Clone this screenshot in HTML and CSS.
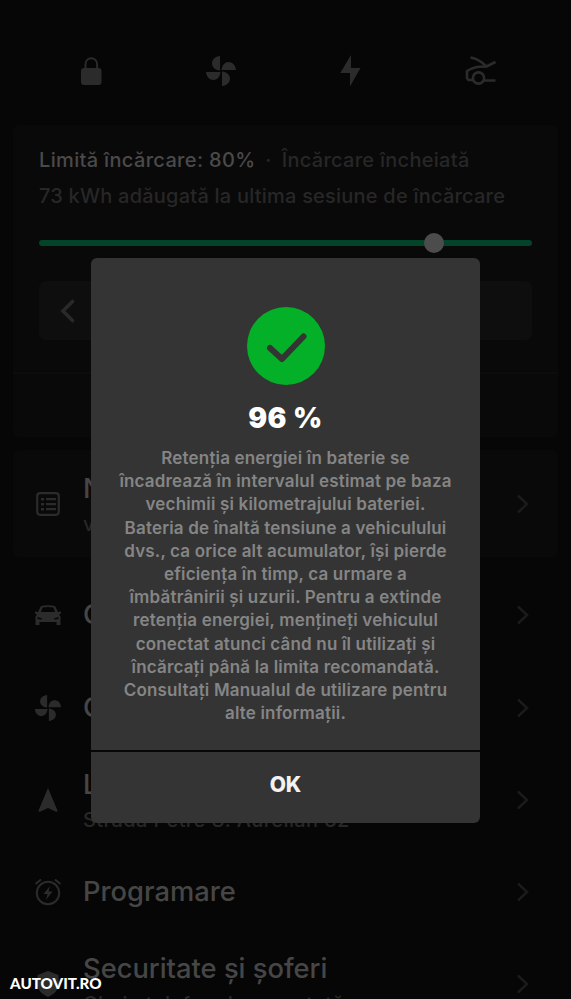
FILE: index.html
```html
<!DOCTYPE html>
<html lang="ro">
<head>
<meta charset="UTF-8">
<meta name="viewport" content="width=device-width, initial-scale=1.0">
<title>Retenția energiei în baterie</title>
<link rel="stylesheet" href="styles.css">
</head>
<body>

<!-- shared icons -->
<svg class="defs">
  <symbol id="fan" viewBox="0 0 32 32">
    <path d="M15 1v14.500C10 15 7 12 7 8.500 7 4.500 10 1.500 15 1zM31 15H16.500C17 10 20 7 23.500 7 27.500 7 30.500 10 31 15zM17 31V16.500C22 17 25 20 25 23.500 25 27.500 22 30.500 17 31zM1 17h14.500C15 22 12 25 8.500 25 4.500 25 1.500 22 1 17z"/>
  </symbol>
  <symbol id="chevron" viewBox="0 0 14 20">
    <path d="M2 1.500L11 10 2 18.500" fill="none" stroke="currentColor" stroke-width="2.500"/>
  </symbol>
</svg>

<div class="screen">
  <div class="quick">
    <svg width="30" height="30" viewBox="0 0 30 30"><path d="M9.500 14V8a5.800 5.800 0 0 1 11.600 0v6" fill="none" stroke="currentColor" stroke-width="2"/><rect x="5" y="12" width="20.500" height="17" rx="3"/></svg>
    <svg width="32" height="32"><use href="#fan"/></svg>
    <svg width="30" height="32" viewBox="0 0 30 32"><path d="M16 0L5.300 18H15v13.500L25.500 13H16z"/></svg>
    <svg width="32" height="30" viewBox="0 0 32 30"><g fill="none" stroke="currentColor" stroke-width="2.600" stroke-linejoin="round"><path d="M6.500 1.500c7 1 11 4 16 9l9-4.500"/><path d="M22.500 10.500c-10 0-14 1-19.500 4.500V22l1.500 2H9M20 24.500h11.500"/><circle cx="14.500" cy="22" r="5.600"/></g></svg>
  </div>

  <div class="card charge">
    <div class="charge-body">
      <div class="limit">Limită încărcare: 80%<span class="status"><span class="dot">·</span>Încărcare încheiată</span></div>
      <div class="added">73 kWh adăugată la ultima sesiune de încărcare</div>
      <div class="slider"><span class="knob"></span></div>
      <div class="stepper">
        <svg width="16" height="24" viewBox="0 0 16 24"><path d="M13.500 2.500L4 12l9.500 9.500" fill="none" stroke="currentColor" stroke-width="3.600" stroke-linecap="round"/></svg>
      </div>
    </div>
  </div>

  <div class="card row news">
    <svg class="icon" viewBox="0 0 28 28"><rect x="3.200" y="3.200" width="21.600" height="21.600" rx="3" fill="none" stroke="currentColor" stroke-width="2.200"/><path d="M7 8h3v2.500H7zM7 13h3v2.500H7zM7 18h3v2.500H7zM12 8h10v2.300H12zM12 13h10v2.300H12zM12 18h10v2.300H12z"/></svg>
    <div class="label"><h3>Noutăți</h3><p>v11</p></div>
    <svg class="go"><use href="#chevron"/></svg>
  </div>

  <div class="row">
    <svg class="icon" viewBox="0 0 28 28"><path d="M7 5Q14 3.500 21 5L24 11l3-.5v2l-2 1 1.500 2V24h-4v-3h-17v3h-4v-8.500l1.500-2-2-1v-2l3 .5z"/><path class="hole" d="M8.500 6.500Q14 5.500 19.500 6.500L21 11H7z"/><path class="hole" d="M3.500 16l4.500 1.500v1L3.500 18zM24.500 16L20 17.500v1l4.500-.5z"/></svg>
    <div class="label"><h3>Comenzi</h3></div>
    <svg class="go"><use href="#chevron"/></svg>
  </div>

  <div class="row">
    <svg class="icon"><use href="#fan"/></svg>
    <div class="label"><h3>Climatizare</h3></div>
    <svg class="go"><use href="#chevron"/></svg>
  </div>

  <div class="row">
    <svg class="icon" viewBox="0 0 28 28"><path d="M14 2l9.500 22.500q.2 1.800-1.500 1.200L14 22l-8 3.700q-1.700.6-1.500-1.200z"/></svg>
    <div class="label"><h3>Locație</h3><p>Strada Petre S. Aurelian 32</p></div>
    <svg class="go"><use href="#chevron"/></svg>
  </div>

  <div class="row">
    <svg class="icon" viewBox="0 0 28 28"><g fill="none" stroke="currentColor" stroke-width="2"><circle cx="14" cy="15" r="11.200"/><path d="M1.500 6L7 1.500M26.500 6L21 1.500"/></g><path d="M16 8l-6.500 8h4L12 22l6.500-8.500h-4z"/></svg>
    <div class="label"><h3>Programare</h3></div>
    <svg class="go"><use href="#chevron"/></svg>
  </div>

  <div class="row">
    <svg class="icon" viewBox="0 0 28 28"><path d="M14 1l10.500 4v9c0 6-4 10-10.500 13C7.500 24 3.500 20 3.500 14V5z"/></svg>
    <div class="label"><h3>Securitate și șoferi</h3><p>Cheie telefon deconectată</p></div>
    <svg class="go"><use href="#chevron"/></svg>
  </div>
</div>

<div class="modal">
  <div class="modal-body">
    <svg class="check" viewBox="0 0 78 78"><circle cx="39" cy="39" r="39" fill="#04b027"/><path d="M23 41l12 11L56.500 29.500" fill="none" stroke="#343434" stroke-width="6" stroke-linecap="round" stroke-linejoin="round"/></svg>
    <h2>96 %</h2>
    <p>Retenția energiei în baterie se<br>
    încadrează în intervalul estimat pe baza<br>
    vechimii și kilometrajului bateriei.<br>
    Bateria de înaltă tensiune a vehiculului<br>
    dvs., ca orice alt acumulator, își pierde<br>
    eficiența în timp, ca urmare a<br>
    îmbătrânirii și uzurii. Pentru a extinde<br>
    retenția energiei, mențineți vehiculul<br>
    conectat atunci când nu îl utilizați și<br>
    încărcați până la limita recomandată.<br>
    Consultați Manualul de utilizare pentru<br>
    alte informații.</p>
  </div>
  <button class="ok">OK</button>
</div>

<div class="watermark">AUTOVIT.RO</div>

</body>
</html>
```
FILE: styles.css
```css
* {
  box-sizing: border-box;
}
body {
  margin: 0;
  background-color: #060606;
  font-family: Inter, "Liberation Sans", sans-serif;
  color: #464646;
}
h2, h3, p {
  margin: 0;
}
svg {
  fill: currentColor;
  flex-shrink: 0;
}
.defs {
  display: none;
}
.screen {
  height: 999px;
  overflow: hidden;
  padding: 0 13px;
}
.quick {
  display: flex;
  justify-content: space-between;
  align-items: center;
  height: 125px;
  padding: 16px 62px 0 63px;
  color: #2b2b2b;
}
.card {
  background-color: #090909;
  border-radius: 6px;
}
.charge {
  height: 312px;
  margin-bottom: 13px;
}
.charge-body {
  height: 249px;
  padding: 22px 26px 0;
  border-bottom: 2px solid #0c0c0c;
}
.limit, .added {
  font-size: 20px;
  font-weight: 500;
  line-height: 26px;
  letter-spacing: 0.22px;
  white-space: nowrap;
}
.limit {
  color: #4a4a4a;
  letter-spacing: 0.34px;
}
.status, .added {
  color: #272727;
}
.status {
  letter-spacing: 0.28px;
}
.dot {
  margin: 0 10px;
}
.added {
  margin-top: 10px;
}
.slider {
  display: flex;
  align-items: center;
  height: 6px;
  margin-top: 31px;
  border-radius: 3px;
  background-color: #02432a;
}
.knob {
  width: 20px;
  height: 20px;
  margin-left: 385px;
  border-radius: 50%;
  background-color: #4c4c4c;
}
.stepper {
  display: flex;
  align-items: center;
  height: 59px;
  margin-top: 35px;
  padding-left: 20px;
  border-radius: 7px;
  background-color: #0e0e0e;
  color: #292929;
}
.row {
  display: flex;
  align-items: center;
  height: 92.200px;
  padding: 0 28px 0 21px;
}
.news {
  height: 107px;
  margin-bottom: 12.400px;
}
.icon {
  width: 28px;
  height: 28px;
  margin-right: 21px;
  color: #2b2b2b;
}
.hole {
  fill: #060606;
}
.label {
  flex: 1;
  white-space: nowrap;
}
.label h3 {
  font-size: 27.300px;
  font-weight: 500;
  line-height: 36px;
}
.label p {
  font-size: 20px;
  font-weight: 500;
  line-height: 26px;
  letter-spacing: 0.38px;
  margin-top: 4px;
  color: #272727;
}
.go {
  width: 14px;
  height: 20px;
  color: #1b1b1b;
}
.modal {
  position: absolute;
  left: 91px;
  top: 258px;
  width: 389px;
  height: 565px;
  border-radius: 6px;
  background-color: #343434;
}
.modal-body {
  height: 494px;
  padding-top: 49px;
  text-align: center;
  border-bottom: 2px solid #060606;
}
.check {
  display: block;
  width: 78px;
  height: 78px;
  margin: 0 auto;
}
.modal h2 {
  margin: 15px 0 11px;
  font-size: 28px;
  font-weight: 900;
  line-height: 36px;
  letter-spacing: 0.5px;
  color: #fff;
}
.modal p {
  font-size: 17px;
  font-weight: 600;
  line-height: 23.200px;
  letter-spacing: 0.17px;
  color: #858585;
  white-space: nowrap;
}
.ok {
  display: block;
  width: 100%;
  height: 64px;
  padding: 0;
  border: none;
  background: none;
  font-family: inherit;
  font-size: 21px;
  font-weight: 800;
  color: #f2f2f2;
}
.watermark {
  position: absolute;
  left: 10px;
  top: 973px;
  font-family: Lato, sans-serif;
  font-size: 15.200px;
  font-weight: 900;
  line-height: 20px;
  color: #fff;
}
```
